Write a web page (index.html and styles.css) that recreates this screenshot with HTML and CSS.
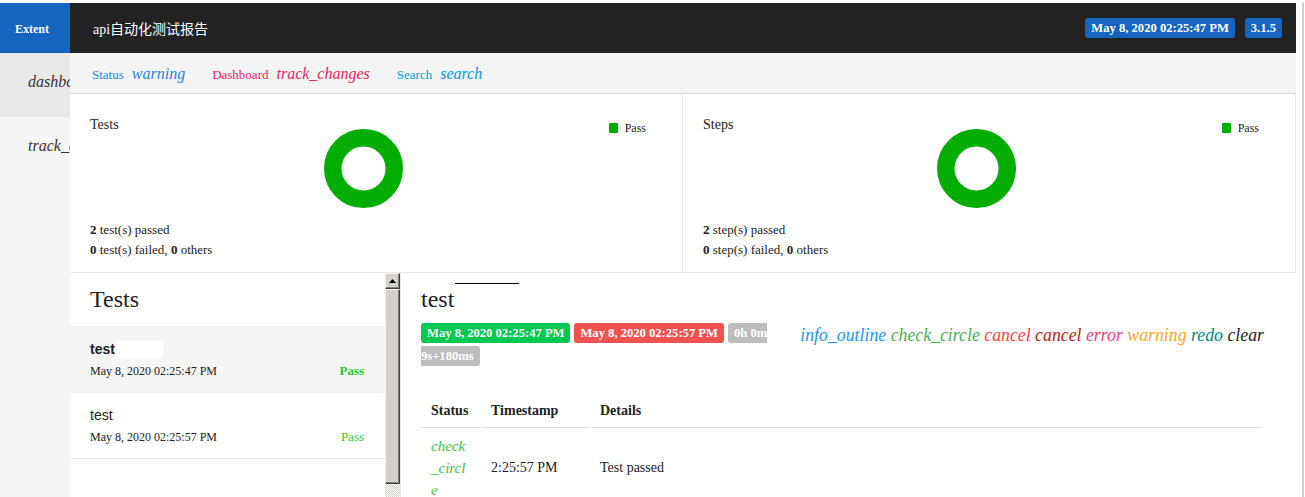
FILE: index.html
```html
<!DOCTYPE html>
<html lang="zh">
<head>
<meta charset="utf-8">
<title>api自动化测试报告</title>
<link rel="stylesheet" href="styles.css">
</head>
<body>
<div class="window">
  <aside class="side">
    <div class="logo">Extent</div>
    <div class="side-item active"><i class="mi">dashboard</i></div>
    <div class="side-item"><i class="mi">track_changes</i></div>
  </aside>

  <main class="main">
    <header class="topbar">
      <div class="title">api自动化测试报告</div>
      <div class="top-badges">
        <span class="tbadge">May 8, 2020 02:25:47 PM</span>
        <span class="tbadge">3.1.5</span>
      </div>
    </header>

    <nav class="subnav">
      <span class="nav-item nav-status">Status <i class="mi">warning</i></span>
      <span class="nav-item nav-dash">Dashboard <i class="mi">track_changes</i></span>
      <span class="nav-item nav-search">Search <i class="mi">search</i></span>
    </nav>

    <section class="dash">
      <div class="card">
        <div class="card-top">
          <div class="card-title">Tests</div>
          <svg class="donut" width="79" height="79" viewBox="0 0 79 79"><circle cx="39.5" cy="39.5" r="30.75" fill="none" stroke="#00ad00" stroke-width="17.5"/></svg>
          <div class="legend"><span class="sq"></span>Pass</div>
        </div>
        <div class="stats">
          <div><b>2</b> test(s) passed</div>
          <div><b>0</b> test(s) failed, <b>0</b> others</div>
        </div>
      </div>
      <div class="card">
        <div class="card-top">
          <div class="card-title">Steps</div>
          <svg class="donut" width="79" height="79" viewBox="0 0 79 79"><circle cx="39.5" cy="39.5" r="30.75" fill="none" stroke="#00ad00" stroke-width="17.5"/></svg>
          <div class="legend"><span class="sq"></span>Pass</div>
        </div>
        <div class="stats">
          <div><b>2</b> step(s) passed</div>
          <div><b>0</b> step(s) failed, <b>0</b> others</div>
        </div>
      </div>
    </section>

    <section class="lower">
      <div class="list">
        <div class="list-head">Tests</div>
        <div class="test-row active">
          <div class="test-name">test<span class="name-mask"></span></div>
          <div class="test-meta"><span class="test-date">May 8, 2020 02:25:47 PM</span><span class="pass">Pass</span></div>
        </div>
        <div class="test-row">
          <div class="test-name">test</div>
          <div class="test-meta"><span class="test-date">May 8, 2020 02:25:57 PM</span><span class="pass">Pass</span></div>
        </div>
      </div>

      <div class="vscroll">
        <div class="sb-btn"><svg width="7" height="4" viewBox="0 0 7 4"><path d="M3.5 0 L7 4 L0 4 Z" fill="#000"/></svg></div>
        <div class="sb-thumb"></div>
        <div class="sb-track"></div>
      </div>

      <div class="detail">
        <div class="mark"></div>
        <div class="detail-title">test</div>
        <div class="detail-head">
          <div class="badges"><span class="badge b-green">May 8, 2020 02:25:47 PM</span> <span class="badge b-red">May 8, 2020 02:25:57 PM</span> <span class="badge b-gray">0h 0m 9s+180ms</span></div>
          <div class="icons"><i class="ic-blue">info_outline</i> <i class="ic-green">check_circle</i> <i class="ic-red">cancel</i> <i class="ic-dred">cancel</i> <i class="ic-pink">error</i> <i class="ic-orange">warning</i> <i class="ic-teal">redo</i> <i class="ic-black">clear</i></div>
        </div>
        <table class="steps">
          <colgroup><col class="c-status"><col class="c-time"><col></colgroup>
          <thead>
            <tr><th class="th-status">Status</th><th>Timestamp</th><th>Details</th></tr>
          </thead>
          <tbody>
            <tr><td class="td-status">check_circle</td><td>2:25:57 PM</td><td>Test passed</td></tr>
          </tbody>
        </table>
      </div>
    </section>
  </main>

  <div class="edge"><div class="edge-line"></div></div>
</div>
</body>
</html>
```

FILE: styles.css
```css
* { box-sizing: border-box; }

html, body {
  margin: 0;
  height: 100%;
  overflow: hidden;
}

body {
  background: #fff;
  padding-top: 3px;
  font-family: "Liberation Serif", "Noto Sans CJK SC", serif;
  color: #222;
}

.window {
  display: flex;
  height: 100%;
}

.mi { font-style: italic; }

/* sidebar */
.side {
  width: 70px;
  flex: none;
  background: #f5f5f5;
  overflow: hidden;
}

.logo {
  height: 50px;
  background: #1565c0;
  color: #fff;
  font-weight: bold;
  font-size: 12px;
  display: flex;
  align-items: center;
  padding: 2px 0 0 15px;
}

.side-item {
  height: 64px;
  display: flex;
  align-items: center;
  padding: 0 0 6px 28px;
  white-space: nowrap;
}

.side-item.active { background: #e8e8e8; }

.side-item .mi {
  font-size: 16px;
  color: #333;
}

/* main */
.main {
  width: 1226px;
  flex: none;
  display: flex;
  flex-direction: column;
  min-height: 0;
}

.topbar {
  height: 50px;
  flex: none;
  background: #222;
  display: flex;
  align-items: center;
  justify-content: space-between;
  padding: 0 14px 0 23px;
}

.title {
  color: #fff;
  font-size: 14px;
}

.top-badges {
  display: flex;
  gap: 10px;
}

.tbadge {
  background: #1565c0;
  color: #fff;
  font-weight: bold;
  font-size: 12.6px;
  height: 20px;
  line-height: 20px;
  padding: 0 6px;
  border-radius: 3px;
}

/* sub navigation */
.subnav {
  height: 41px;
  flex: none;
  background: #f4f4f4;
  border-bottom: 1px solid #dcdcdc;
  display: flex;
  align-items: center;
  padding: 1px 0 0 22px;
  gap: 27px;
}

.nav-item {
  display: flex;
  align-items: baseline;
  gap: 8px;
  font-size: 13px;
}

.nav-item .mi { font-size: 16px; }

.nav-status { color: #1e88e5; }
.nav-dash { color: #e91e63; }
.nav-search { color: #039be5; }

/* dashboard cards */
.dash {
  display: grid;
  grid-template-columns: 1fr 1fr;
  flex: none;
}

.card {
  border-right: 1px solid #e8e8e8;
  border-bottom: 1px solid #e8e8e8;
  padding: 23px 36px 12px 20px;
}

.card-top {
  display: flex;
  align-items: flex-start;
}

.card-title {
  flex: 0 0 234px;
  font-size: 14px;
  line-height: 16px;
}

.donut {
  flex: none;
  margin-top: 12px;
  display: block;
}

.legend {
  margin-left: auto;
  margin-top: 3px;
  display: flex;
  align-items: center;
  gap: 7px;
  font-size: 12px;
  line-height: 16px;
}

.sq {
  width: 9px;
  height: 10px;
  background: #00ad00;
  border-radius: 1px;
}

.stats {
  margin-top: 12px;
  font-size: 13px;
  line-height: 20px;
}

/* lower section */
.lower {
  flex: 1;
  display: flex;
  min-height: 0;
  overflow: hidden;
}

.list {
  width: 315px;
  flex: none;
}

.list-head {
  height: 54px;
  border-bottom: 1px solid #ececec;
  font-size: 24px;
  line-height: 28px;
  padding: 12px 20px 0;
}

.test-row {
  border-bottom: 1px solid #ececec;
  padding: 13px 21px 13px 20px;
}

.test-row.active { background: #f5f5f5; }

.test-name {
  font-family: "Liberation Sans", Arial, sans-serif;
  font-size: 14px;
  line-height: 18px;
  display: flex;
  align-items: center;
}

.test-row.active .test-name { font-weight: bold; }

.name-mask {
  width: 48px;
  height: 17px;
  background: #fff;
}

.test-meta {
  margin-top: 5px;
  display: flex;
  justify-content: space-between;
  align-items: center;
  line-height: 16px;
}

.test-date { font-size: 12px; }

.pass {
  font-size: 13px;
  color: #2fc92f;
}

.test-row.active .pass { font-weight: bold; }

/* fake classic scrollbar */
.vscroll {
  width: 15px;
  flex: none;
  display: flex;
  flex-direction: column;
  background: repeating-conic-gradient(#ffffff 0 25%, #d4d0c8 0 50%) 0 0 / 2px 2px;
}

.sb-btn,
.sb-thumb {
  background: #d4d0c8;
  border: 1px solid;
  border-color: #f4f4f4 #404040 #404040 #f4f4f4;
  box-shadow: inset -1px -1px #808080;
}

.sb-btn {
  height: 16px;
  display: flex;
  align-items: center;
  justify-content: center;
}

.sb-thumb { height: 195px; }

.sb-track { flex: 1; }

/* detail */
.detail {
  flex: 1;
  min-width: 0;
  border-left: 1px solid #e8e8e8;
  padding: 10px 32px 0 20px;
}

.mark {
  margin-left: 34px;
  width: 64px;
  height: 1px;
  background: #000;
}

.detail-title {
  margin-top: 1px;
  font-size: 24px;
  line-height: 28px;
}

.detail-head {
  margin-top: 8px;
  display: flex;
  justify-content: space-between;
  align-items: flex-start;
}

.badges {
  width: 352px;
  font-size: 16px;
  line-height: 21px;
}

.badge {
  font-size: 12.6px;
  font-weight: bold;
  color: #fff;
  padding: 3px 6px;
  border-radius: 3px;
}

.b-green { background: #00c853; }
.b-red { background: #ef5350; }
.b-gray { background: #bdbdbd; }

.icons {
  margin-top: 4px;
  font-size: 17.8px;
  line-height: 21px;
  font-style: italic;
  white-space: nowrap;
}

.ic-blue { color: #2196f3; }
.ic-green { color: #4caf50; }
.ic-red { color: #f44336; }
.ic-dred { color: #b71c1c; }
.ic-pink { color: #ec407a; }
.ic-orange { color: #ffa726; }
.ic-teal { color: #00897b; }
.ic-black { color: #212121; }

.steps {
  margin: 25px 0 0 -2px;
  width: calc(100% + 2px);
  border-spacing: 2px;
  table-layout: fixed;
  font-size: 14px;
}

.c-status { width: 60px; }
.c-time { width: 107px; }

.steps th {
  text-align: left;
  font-weight: bold;
  line-height: 17px;
  padding: 8px 9px 8px 8px;
  border-bottom: 1px solid #dcdcdc;
}

.steps th.th-status { padding-left: 10px; }

.steps td {
  padding: 5px 9px 5px 8px;
  vertical-align: middle;
}

.steps td.td-status {
  padding-left: 10px;
  padding-right: 10px;
  font-style: italic;
  font-size: 15px;
  line-height: 22px;
  color: #3cc43c;
  word-break: break-all;
}

/* right window edge */
.edge {
  flex: 1;
  padding-left: 6px;
  display: flex;
}

.edge-line {
  width: 2px;
  background: #c9cde0;
}
```
